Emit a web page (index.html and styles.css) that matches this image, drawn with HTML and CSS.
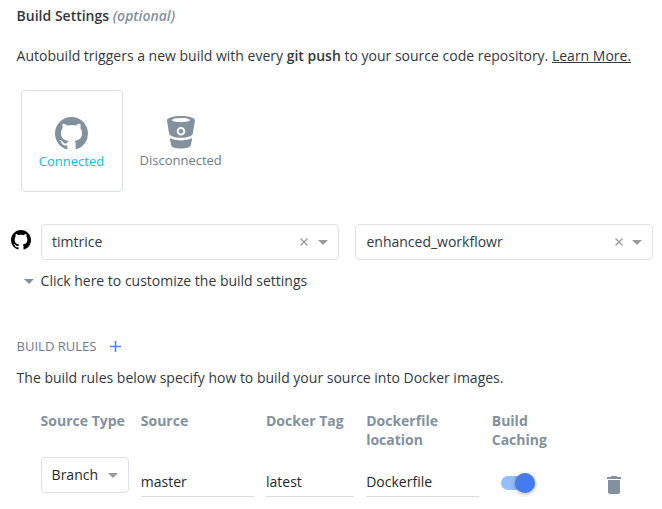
FILE: index.html
```html
<!DOCTYPE html>
<html lang="en">
<head>
<meta charset="utf-8">
<title>Build Settings</title>
<link rel="stylesheet" href="styles.css">
</head>
<body>
<svg class="defs" width="0" height="0" aria-hidden="true">
  <symbol id="github" viewBox="0 0 16 16"><path d="M8 0C3.58 0 0 3.58 0 8c0 3.54 2.29 6.53 5.47 7.59.4.07.55-.17.55-.38 0-.19-.01-.82-.01-1.49-2.01.37-2.53-.49-2.69-.94-.09-.23-.48-.94-.82-1.13-.28-.15-.68-.52-.01-.53.63-.01 1.08.58 1.23.82.72 1.21 1.87.87 2.33.66.07-.52.28-.87.51-1.07-1.78-.2-3.64-.89-3.64-3.95 0-.87.31-1.59.82-2.15-.08-.2-.36-1.02.08-2.12 0 0 .67-.21 2.2.82.64-.18 1.32-.27 2-.27s1.36.09 2 .27c1.53-1.04 2.2-.82 2.2-.82.44 1.1.16 1.92.08 2.12.51.56.82 1.27.82 2.15 0 3.07-1.87 3.75-3.65 3.95.29.25.54.73.54 1.48 0 1.07-.01 1.93-.01 2.2 0 .21.15.46.55.38A8.01 8.01 0 0 0 16 8c0-4.42-3.58-8-8-8z"/></symbol>
</svg>
<main class="page">
  <h1 class="title">Build Settings <em>(optional)</em></h1>
  <p class="intro">Autobuild triggers a new build with every <b>git push</b> to your source code repository. <a href="#">Learn More.</a></p>

  <section class="providers">
    <div class="provider selected">
      <svg class="logo-github" width="33" height="33"><use href="#github"/></svg>
      <span>Connected</span>
    </div>
    <div class="provider">
      <svg class="logo-bitbucket" width="28" height="33" viewBox="0 0 28 33">
        <path fill-rule="evenodd" d="M14 0C6 0 0 1.900 0 4.300c0 .6 1.500 9.300 2.200 13.400.3 1.800 5 4.100 11.800 4.100s11.500-2.300 11.800-4.100C26.500 13.600 28 4.900 28 4.300 28 1.900 22 0 14 0zm0 2c5 0 9 .9 9 2.100S19 6.200 14 6.200 5 5.300 5 4.100 9 2 14 2zm0 9a4.300 4.300 0 1 1 0 8.600 4.300 4.300 0 0 1 0-8.600z"/>
        <circle cx="14" cy="15.300" r="2.200"/>
        <path d="M3.200 22.300c-.3 0-.4.200-.3.600l1.300 6.500c.5 1.700 4.500 3.100 9.800 3.100s9.300-1.400 9.800-3.100l1.300-6.500c.1-.4 0-.6-.3-.6-.3 0-3.800 2.200-10.800 2.200S3.500 22.300 3.200 22.300z"/>
      </svg>
      <span>Disconnected</span>
    </div>
  </section>

  <section class="repo">
    <svg class="mark" width="20" height="20"><use href="#github"/></svg>
    <div class="select">
      <span class="value">timtrice</span>
      <svg class="clear" width="8" height="8" viewBox="0 0 8 8"><path d="M.5.5l7 7M7.500.5l-7 7"/></svg>
      <i class="caret"></i>
    </div>
    <div class="select">
      <span class="value">enhanced_workflowr</span>
      <svg class="clear" width="8" height="8" viewBox="0 0 8 8"><path d="M.5.5l7 7M7.500.5l-7 7"/></svg>
      <i class="caret"></i>
    </div>
  </section>
  <div class="customize"><i class="caret slate"></i>Click here to customize the build settings</div>

  <h2 class="rules-title">BUILD RULES
    <svg width="11" height="11" viewBox="0 0 11 11"><path d="M5.500 0v11M0 5.500h11"/></svg>
  </h2>
  <p class="rules-text">The build rules below specify how to build your source into Docker images.</p>

  <section class="rules">
    <b>Source Type</b><b>Source</b><b>Docker Tag</b><b>Dockerfile location</b><b>Build Caching</b><b></b>
    <div class="select small"><span class="value">Branch</span><i class="caret"></i></div>
    <div class="field">master</div>
    <div class="field">latest</div>
    <div class="field">Dockerfile</div>
    <div class="toggle"><i class="knob"></i></div>
    <svg class="trash" width="24" height="24" viewBox="0 0 24 24"><path d="M6 19c0 1.100.9 2 2 2h8c1.100 0 2-.9 2-2V7H6v12zM19 4h-3.500l-1-1h-5l-1 1H5v2h14V4z"/></svg>
  </section>
</main>
</body>
</html>
```
FILE: styles.css
```css
* { box-sizing: border-box; }
body {
  margin: 0;
  background: #fff;
  color: #33383f;
  font: 14px/20px "Open Sans", "Noto Sans", sans-serif;
}
svg { display: block; }
.defs { position: absolute; }
h1, h2, p { margin: 0; }
.page { padding: 6px 9px 0 16.6px; white-space: nowrap; }
.title { font-size: 14px; font-weight: 600; line-height: 20px; }
.title em { color: #8291a0; font-weight: 600; }
.intro { margin-top: 20px; }
.intro b { font-weight: 600; }
.intro a { color: inherit; text-decoration: underline; }

.providers { display: flex; gap: 6.7px; margin: 24px 0 0 4.4px; }
.provider {
  display: flex;
  flex-direction: column;
  align-items: center;
  width: 102px;
  height: 102px;
  padding-top: 26px;
  border: 1px solid transparent;
  border-radius: 4px;
  color: #6f7b8a;
  font-size: 13px;
  line-height: 18px;
}
.provider.selected { border-color: #dcdfe3; color: #00cbca; }
.provider.selected span { margin-left: -1px; }
.provider svg { fill: #82919e; }
.provider span { margin-top: 2px; }
.logo-bitbucket { margin-top: -1px; }

.repo { display: flex; align-items: center; margin: 32px 0 0 -5.6px; }
.mark { fill: #000; margin: 0 10px 4px 0; }
.select {
  display: flex;
  align-items: center;
  width: 298px;
  height: 36px;
  padding: 0 10px;
  border: 1px solid #dfe1e6;
  border-radius: 4px;
}
.select + .select { margin-left: 16.3px; }
.select + .select .value { padding-left: .3px; }
.select + .select .clear { margin-right: 9px; }
.value { flex: 1; }
.clear { margin-right: 10px; fill: none; stroke: #999; stroke-width: 1.3; }
.caret {
  width: 0;
  height: 0;
  border: 5px solid transparent;
  border-top-color: #999;
  border-bottom-width: 0;
}
.caret.slate { border-top-color: #82919e; }
.customize { display: flex; align-items: center; gap: 7px; margin: 11px 0 0 7px; }

.rules-title {
  display: flex;
  align-items: center;
  gap: 13.3px;
  margin-top: 45px;
  color: #6f7b8a;
  font-size: 13px;
  font-weight: 400;
  line-height: 20px;
}
.rules-title svg { stroke: #4a8af4; stroke-width: 1.6; }
.rules-text { margin-top: 12px; }

.rules {
  display: grid;
  grid-template-columns: 88px 113px 88px 113px 98px 24px;
  column-gap: 12.2px;
  margin: 23px 0 0 24px;
  color: #26282c;
}
.rules > b { color: #82919e; line-height: 19px; height: 46px; white-space: normal; }
.rules > b:nth-child(5) { width: 60px; padding-left: .4px; }
.select.small { width: 88px; }
.field { height: 40px; padding-top: 15px; border-bottom: 1px solid #dadce0; }
.toggle {
  display: flex;
  align-items: center;
  justify-content: flex-end;
  width: 34px;
  height: 14px;
  margin: 19px 0 0 10px;
  border-radius: 7px;
  background: #93bffa;
}
.knob { width: 20px; height: 20px; border-radius: 50%; background: #467bf0; box-shadow: 0 1px 4px rgba(0, 0, 0, .35); }
.trash { margin-top: 16px; fill: #82919e; }
```
